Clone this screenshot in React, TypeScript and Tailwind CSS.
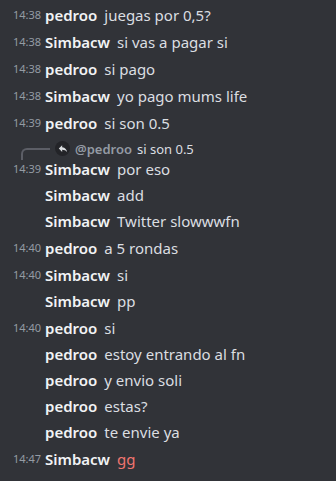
import React from "react"

interface Msg {
  time?: string
  name: string
  text: string
  reply?: { name: string; text: string }
  red?: boolean
}

const messages: Msg[] = [
  { time: "14:38", name: "pedroo", text: "juegas por 0,5?" },
  { time: "14:38", name: "Simbacw", text: "si vas a pagar si" },
  { time: "14:38", name: "pedroo", text: "si pago" },
  { time: "14:38", name: "Simbacw", text: "yo pago mums life" },
  { time: "14:39", name: "pedroo", text: "si son 0.5" },
  { time: "14:39", name: "Simbacw", text: "por eso", reply: { name: "@pedroo", text: "si son 0.5" } },
  { name: "Simbacw", text: "add" },
  { name: "Simbacw", text: "Twitter slowwwfn" },
  { time: "14:40", name: "pedroo", text: "a 5 rondas" },
  { time: "14:40", name: "Simbacw", text: "si" },
  { name: "Simbacw", text: "pp" },
  { time: "14:40", name: "pedroo", text: "si" },
  { name: "pedroo", text: "estoy entrando al fn" },
  { name: "pedroo", text: "y envio soli" },
  { name: "pedroo", text: "estas?" },
  { name: "pedroo", text: "te envie ya" },
  { time: "14:47", name: "Simbacw", text: "gg", red: true },
]

function ReplyIcon() {
  return (
    <svg width="10" height="10" viewBox="0 0 24 24" fill="#dbdee1">
      <path d="M10 8V3L2 11l8 8v-5c5 0 9 1.5 12 6-1-6-4.5-11.5-12-12z" />
    </svg>
  )
}

export default function App() {
  return (
    <div
      className="w-[336px] h-[481px] bg-[#313338] overflow-hidden pt-[2px]"
      style={{ fontFamily: '"Noto Sans", "Open Sans", sans-serif' }}
    >
      {messages.map((m, i) => (
        <div key={i} className={m.time && i > 0 && !m.reply ? "mt-[1px]" : ""}>
          {m.reply && (
            <div className="relative h-[20px] flex items-end pl-[55px] leading-[14px]">
              {/* reply connector */}
              <div className="absolute left-[21px] top-[12px] w-[29px] h-[12px] border-l-2 border-t-2 border-[#5c5e66] rounded-tl-[6px]" />
              <div className="w-[15px] h-[15px] rounded-full bg-[#232428] flex items-center justify-center">
                <ReplyIcon />
              </div>
              <span className="ml-[5px] text-[13px] font-semibold text-[#949ba4]">{m.reply.name}</span>
              <span className="ml-[5px] text-[13px] text-[#dbdee1]">{m.reply.text}</span>
            </div>
          )}
          <div className="h-[26px] flex items-center whitespace-nowrap">
            <span className="w-[45px] shrink-0 pr-[4px] text-right text-[11px] text-[#949ba4]">
              {m.time ?? ""}
            </span>
            <span className="text-[15px] font-semibold text-[#f2f3f5]">{m.name}</span>
            <span className={"ml-[7px] text-[15px] " + (m.red ? "text-[#f0756f]" : "text-[#dbdee1]")}>
              {m.text}
            </span>
          </div>
        </div>
      ))}
    </div>
  )
}
